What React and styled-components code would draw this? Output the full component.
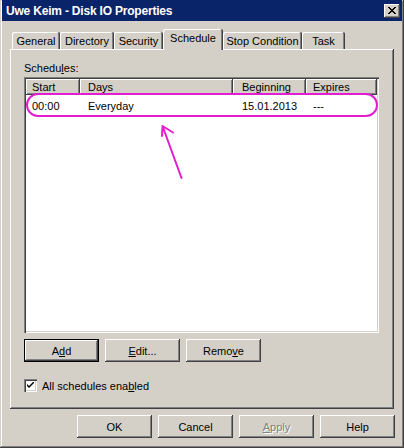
import React from 'react';
import styled, { createGlobalStyle, css } from 'styled-components';

const FACE = '#d4d0c8';
const SHADOW = '#808080';
const DARK = '#404040';
const MARK = '#e21fd0';

const GlobalStyle = createGlobalStyle`
  html, body {
    margin: 0;
    padding: 0;
    background: ${FACE};
  }
  body {
    font-family: "Liberation Sans", Arial, sans-serif;
    font-size: 11px;
    color: #000;
  }
`;

const raised = css`
  box-shadow: inset -1px -1px ${DARK}, inset 1px 1px #fff,
    inset -2px -2px ${SHADOW}, inset 2px 2px ${FACE};
`;

const Window = styled.div`
  width: 404px;
  height: 448px;
  box-sizing: border-box;
  padding: 0 2px 2px 2px;
  background: ${FACE};
  box-shadow: inset -1px -1px ${DARK}, inset 1px 1px ${FACE},
    inset -2px -2px ${SHADOW}, inset 2px 2px #fff;
  display: flex;
  flex-direction: column;
`;

const TitleBar = styled.div`
  height: 21px;
  background: #0a246a;
  display: flex;
  align-items: center;
  justify-content: space-between;
  padding: 0 2px 0 4px;
`;

const Title = styled.span`
  color: #fff;
  font-weight: bold;
  font-size: 12px;
  letter-spacing: -0.2px;
`;

const CloseButton = styled.div`
  width: 16px;
  height: 14px;
  background: ${FACE};
  ${raised};
  display: flex;
  align-items: center;
  justify-content: center;
`;

const Body = styled.div`
  display: flex;
  flex-direction: column;
  padding: 8px 0 0 8px;
`;

const TabRow = styled.div`
  display: flex;
  align-items: flex-end;
  padding-left: 2px;
  height: 20px;
  position: relative;
  z-index: 1;
`;

const Tab = styled.div`
  width: ${p => p.$w}px;
  height: ${p => (p.$active ? 21 : 17)}px;
  margin-bottom: ${p => (p.$active ? -1 : 0)}px;
  box-sizing: border-box;
  background: ${FACE};
  border-radius: 2px 2px 0 0;
  box-shadow: inset -1px 0 ${DARK}, inset 1px 1px #fff, inset -2px 0 ${SHADOW};
  display: flex;
  align-items: center;
  justify-content: center;
  padding-bottom: ${p => (p.$active ? 3 : 0)}px;
`;

const TabPage = styled.div`
  position: relative;
  width: 384px;
  height: 360px;
  box-sizing: border-box;
  padding: 12px 0 0 14px;
  background: ${FACE};
  box-shadow: inset -1px -1px ${DARK}, inset 1px 1px #fff, inset -2px -2px ${SHADOW};
`;

const Label = styled.div`
  height: 15px;
  line-height: 15px;
`;

const ListBox = styled.div`
  position: relative;
  margin-top: 1px;
  width: 355px;
  height: 256px;
  box-sizing: border-box;
  padding: 2px;
  background: #fff;
  box-shadow: inset 1px 1px ${SHADOW}, inset 2px 2px ${DARK},
    inset -1px -1px #fff, inset -2px -2px ${FACE};
`;

const Grid = styled.div`
  display: grid;
  grid-template-columns: 54px 153px 73px 71px;
`;

const HeaderCell = styled.div`
  height: 16px;
  line-height: 16px;
  padding-left: ${p => p.$pad}px;
  background: ${FACE};
  box-shadow: inset -1px -1px ${DARK}, inset 1px 1px #fff, inset -2px -2px ${SHADOW};
`;

const Cell = styled.div`
  height: 23px;
  line-height: 23px;
  padding-left: ${p => p.$pad}px;
`;

const Highlight = styled.div`
  position: absolute;
  left: 2px;
  top: 16px;
  width: 352px;
  height: 24px;
  box-sizing: border-box;
  border: 2px solid ${MARK};
  border-radius: 12px;
`;

const Arrow = styled.svg`
  position: absolute;
  left: 145px;
  top: 72px;
`;

const ButtonRow = styled.div`
  display: flex;
  gap: 6px;
  margin-top: ${p => p.$top}px;
  justify-content: ${p => (p.$end ? 'flex-end' : 'flex-start')};
  padding-right: ${p => (p.$end ? 7 : 0)}px;
`;

const Button = styled.div`
  width: 75px;
  height: 23px;
  box-sizing: border-box;
  background: ${FACE};
  ${raised};
  display: flex;
  align-items: center;
  justify-content: center;
  color: ${p => (p.$disabled ? SHADOW : '#000')};
  text-shadow: ${p => (p.$disabled ? '1px 1px #fff' : 'none')};
  ${p =>
    p.$default &&
    css`
      box-shadow: inset 0 0 0 1px #000, inset -2px -2px ${DARK}, inset 2px 2px #fff,
        inset -3px -3px ${SHADOW};
    `}
`;

const CheckRow = styled.label`
  display: flex;
  align-items: center;
  gap: 5px;
  margin-top: 17px;
  height: 13px;
`;

const CheckBox = styled.span`
  width: 13px;
  height: 13px;
  box-sizing: border-box;
  background: #fff;
  box-shadow: inset 1px 1px ${SHADOW}, inset 2px 2px ${DARK},
    inset -1px -1px #fff, inset -2px -2px ${FACE};
  display: flex;
  align-items: center;
  justify-content: center;
`;

const U = styled.span`
  text-decoration: underline;
`;

const tabs = [
  { label: 'General', w: 48 },
  { label: 'Directory', w: 54 },
  { label: 'Security', w: 49 },
  { label: 'Schedule', w: 60, active: true },
  { label: 'Stop Condition', w: 79 },
  { label: 'Task', w: 43 },
];

const columns = [
  { title: 'Start', pad: 6, value: '00:00' },
  { title: 'Days', pad: 8, value: 'Everyday' },
  { title: 'Beginning', pad: 9, value: '15.01.2013' },
  { title: 'Expires', pad: 7, value: '---' },
];

export default function App() {
  return (
    <>
      <GlobalStyle />
      <Window>
        <TitleBar>
          <Title>Uwe Keim - Disk IO Properties</Title>
          <CloseButton>
            <svg width="8" height="7" viewBox="0 0 8 7">
              <path d="M0 0 L7 7 M1 0 L8 7 M7 0 L0 7 M8 0 L1 7" stroke="#000" strokeWidth="1" />
            </svg>
          </CloseButton>
        </TitleBar>
        <Body>
          <TabRow>
            {tabs.map(t => (
              <Tab key={t.label} $w={t.w} $active={t.active}>
                {t.label}
              </Tab>
            ))}
          </TabRow>
          <TabPage>
            <Label>
              Schedu<U>l</U>es:
            </Label>
            <ListBox>
              <Grid>
                {columns.map(c => (
                  <HeaderCell key={c.title} $pad={c.pad}>
                    {c.title}
                  </HeaderCell>
                ))}
                {columns.map(c => (
                  <Cell key={c.title} $pad={c.pad}>
                    {c.value}
                  </Cell>
                ))}
              </Grid>
              <Highlight />
            </ListBox>
            <ButtonRow $top={6}>
              <Button $default>
                A<U>d</U>d
              </Button>
              <Button>
                <U>E</U>dit...
              </Button>
              <Button>
                Remo<U>v</U>e
              </Button>
            </ButtonRow>
            <CheckRow>
              <CheckBox>
                <svg width="7" height="7" viewBox="0 0 7 7">
                  <path d="M0 2 L0 4 L2 6 L7 1 L7 -1 L2 4 Z" fill="#000" />
                </svg>
              </CheckBox>
              <span>
                All schedules ena<U>b</U>led
              </span>
            </CheckRow>
            <Arrow width="32" height="62" viewBox="0 0 32 62">
              <path
                d="M7.5 5 L26.5 57 M7.5 5 L7 15 M7.5 5 L18 11.5"
                stroke={MARK}
                strokeWidth="2"
                fill="none"
                strokeLinecap="round"
              />
            </Arrow>
          </TabPage>
          <ButtonRow $top={6} $end>
            <Button>OK</Button>
            <Button>Cancel</Button>
            <Button $disabled>
              <U>A</U>pply
            </Button>
            <Button>Help</Button>
          </ButtonRow>
        </Body>
      </Window>
    </>
  );
}
